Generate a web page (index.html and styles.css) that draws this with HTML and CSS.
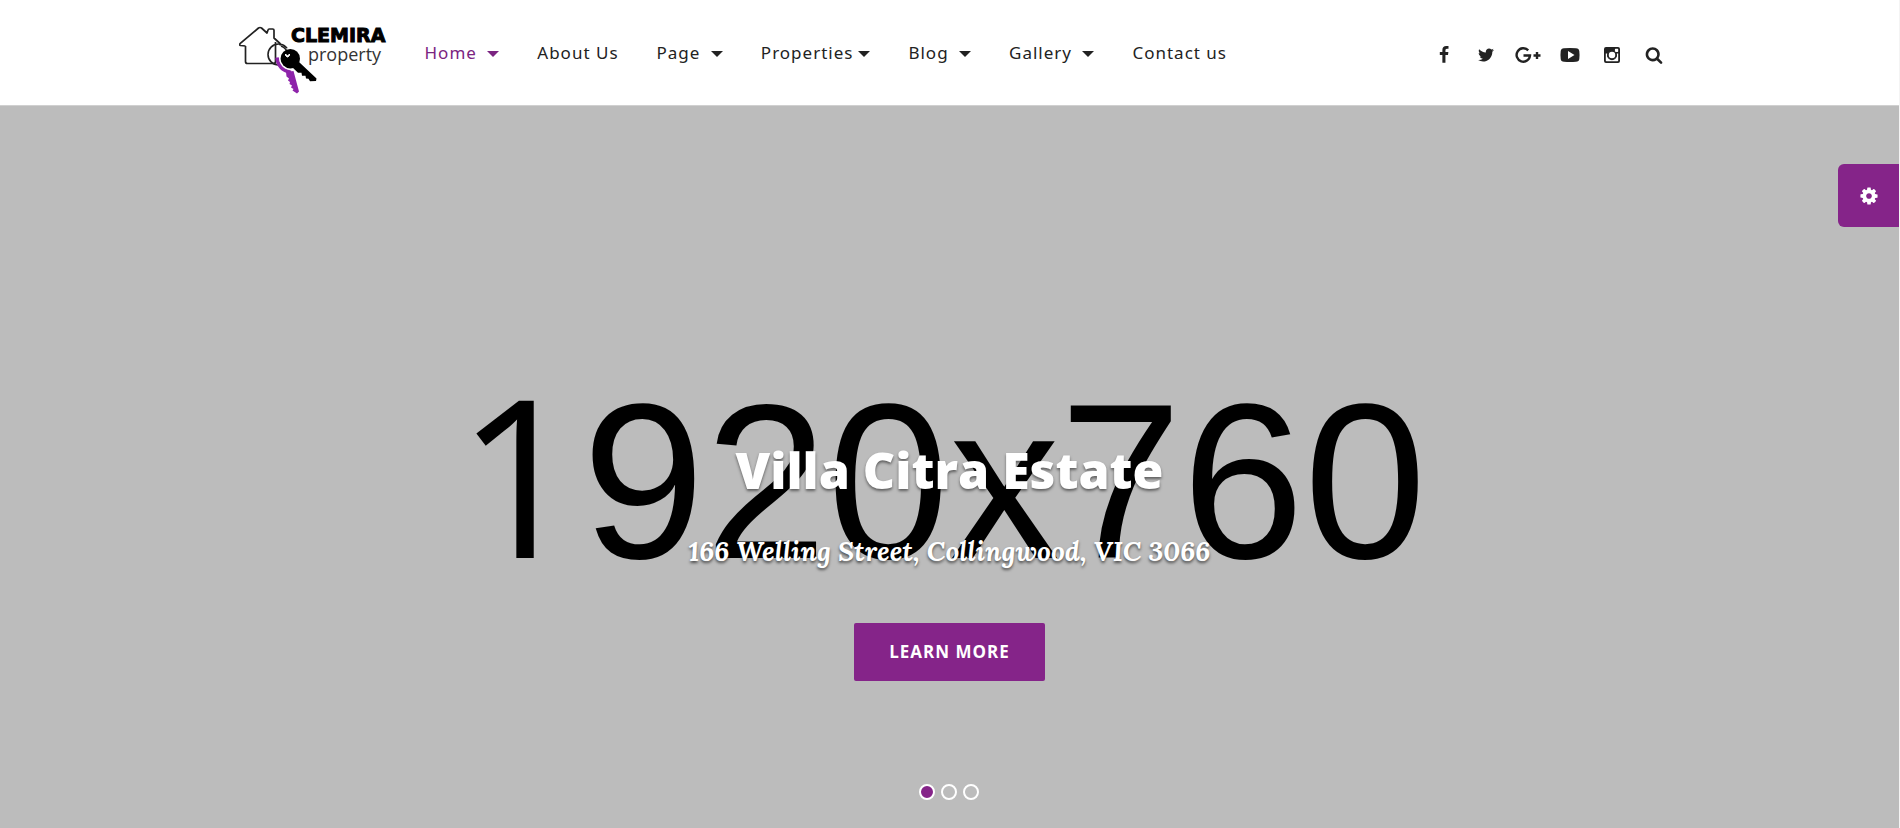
FILE: index.html
```html
<!DOCTYPE html>
<html lang="en">
  <head>
    <meta charset="UTF-8" />
    <meta name="viewport" content="width=device-width, initial-scale=1.0" />
    <title>Clemira Property</title>
    <link rel="stylesheet" href="styles.css">
  </head>
  <body>
    <header class="header">
      <div class="container">
        <a href="#" class="logo" aria-label="Clemira property">
          <svg width="148" height="78" viewBox="0 0 148 78">
            <!-- house -->
            <path d="M6.500 28v15.500q0 2 2 2h26q2 0 2-2V24M6.500 28l-5-.5q-1.500-.5-.5-1.800L19.500 10q1.500-1 3 0l5.500 5 1-3q.2-1 1.200-1h3.500q1.300 0 1.300 1.300V20l6 5.500q1 1-.5 1.500" fill="none" stroke="#222" stroke-width="1.700" stroke-linejoin="round" />
            <!-- key ring and keys -->
            <circle cx="39.500" cy="36.500" r="10.500" fill="none" stroke="#222" stroke-width="1.600" />
            <path d="M38 39.500q1 12 14 15" fill="none" stroke="#8e24aa" stroke-width="3.500" />
            <path d="M47 54l7.500-1 5.500 20.500-2 2-4.500-3 1-1.500-2.500-1.500 1-2-2.500-1.500.5-2-2-1.500 1-2-2.500-2z" fill="#8e24aa" />
            <circle cx="51.300" cy="40.700" r="11" fill="#fff" />
            <path d="M42 28q6 2 6.500 9" fill="none" stroke="#222" stroke-width="1.400" />
            <path d="M53 49l7-5 17.500 16.500-.5 2.500-6 .3-1.500-2.500-2.500-.3-.5-2.800-3.500 0-.5-3-3.500 0z" fill="#000" />
            <circle cx="51.300" cy="40.700" r="9.700" fill="#000" />
            <path d="M46.500 36v1.500q2 3 4 0V36l-2 2z" fill="#fff" stroke="#fff" />
            <text x="52" y="24" class="logo-name">CLEMIRA</text>
            <text x="69" y="43" class="logo-sub">property</text>
          </svg>
        </a>

        <nav class="menu">
          <a href="#" class="active">Home <span class="caret"></span></a>
          <a href="#">About Us</a>
          <a href="#">Page <span class="caret"></span></a>
          <a href="#">Properties<span class="caret"></span></a>
          <a href="#">Blog <span class="caret"></span></a>
          <a href="#">Gallery <span class="caret"></span></a>
          <a href="#">Contact us</a>
        </nav>

        <div class="social">
          <a href="#" aria-label="Facebook">
            <svg width="18" height="18" viewBox="0 0 1792 1792"><path d="M1343 12v264h-157q-86 0-116 36t-30 108v189h293l-39 296h-254v759h-306v-759h-255v-296h255v-218q0-186 104-288.500t277-102.500q147 0 228 12z" /></svg>
          </a>
          <a href="#" aria-label="Twitter">
            <svg width="18" height="18" viewBox="0 0 1792 1792"><path d="M1684 408q-67 98-162 167 1 14 1 42 0 130-38 259.500t-115.500 248.500-184.500 210.500-258 146-323 54.500q-271 0-496-145 35 4 78 4 225 0 401-138-105-2-188-64.500t-114-159.500q33 5 61 5 43 0 85-11-112-23-185.500-111.500t-73.500-205.500v-4q68 38 146 41-66-44-105-115t-39-154q0-88 44-163 121 149 294.500 238.500t371.500 99.500q-8-38-8-74 0-134 94.500-228.500t228.500-94.500q140 0 236 102 109-21 205-78-37 115-142 178 93-10 186-50z" /></svg>
          </a>
          <a href="#" aria-label="Google Plus">
            <svg width="26" height="18" viewBox="0 0 26 18"><path d="M13.200 4.400A6.700 6.700 0 1 0 15 9.500H8.500M22 6v7M18.500 9.500h7" fill="none" stroke="#222" stroke-width="2.400" /></svg>
          </a>
          <a href="#" aria-label="YouTube">
            <svg width="20" height="18" viewBox="0 0 20 18"><path fill-rule="evenodd" d="M4 2.200Q10 1.700 16 2.200 19 2.400 19.300 5q.5 4 0 8-.3 2.600-3.300 2.800-6 .5-12 0Q1 15.600.7 13q-.5-4 0-8Q1 2.400 4 2.200zM8 5v8l6.500-4z" /></svg>
          </a>
          <a href="#" aria-label="Instagram">
            <svg width="18" height="18" viewBox="0 0 18 18"><path fill-rule="evenodd" d="M3 1h12q2 0 2 2v12q0 2-2 2H3q-2 0-2-2V3q0-2 2-2zM2.800 7.500v7q0 .7.700.7h11q.7 0 .7-.7v-7h-1.500a5 5 0 1 1-9.400 0zM12.500 2.800q-.6 0-.6.6v1.900q0 .6.600.6h2.100q.6 0 .6-.6V3.400q0-.6-.6-.6z" /><circle cx="9" cy="9" r="4" fill="#fff" /><circle cx="9" cy="9" r="4" fill="none" stroke="#222" stroke-width="1.500" /></svg>
          </a>
          <a href="#" aria-label="Search">
            <svg width="18" height="18" viewBox="0 0 1792 1792"><path d="M1216 832q0-185-131.500-316.500t-316.500-131.500-316.500 131.500-131.500 316.500 131.500 316.500 316.500 131.500 316.500-131.500 131.500-316.500zm512 832q0 52-38 90t-90 38q-54 0-90-38l-343-342q-179 124-399 124-143 0-273.500-55.500t-225-150-150-225-55.500-273.500 55.500-273.500 150-225 225-150 273.500-55.500 273.500 55.500 225 150 150 225 55.500 273.500q0 220-124 399l343 343q37 37 37 90z" /></svg>
          </a>
        </div>
      </div>
    </header>

    <section class="hero">
      <div class="placeholder" aria-hidden="true">
        <div><span class="one">1</span>920x760</div>
      </div>
      <div class="caption">
        <h1>Villa Citra Estate</h1>
        <p>166 Welling Street, Collingwood, VIC 3066</p>
        <a href="#" class="btn">LEARN MORE</a>
      </div>
      <div class="dots">
        <button class="dot current" aria-label="Slide 1"></button>
        <button class="dot" aria-label="Slide 2"></button>
        <button class="dot" aria-label="Slide 3"></button>
      </div>
      <button class="settings" aria-label="Settings">
        <svg width="20" height="20" viewBox="0 0 1792 1792"><path d="M1152 896q0-106-75-181t-181-75-181 75-75 181 75 181 181 75 181-75 75-181zm512-109v222q0 12-8 23t-20 13l-185 28q-19 54-39 91 35 50 107 138 10 12 10 25t-9 23q-27 37-99 108t-94 71q-12 0-26-9l-138-108q-44 23-91 38-16 136-29 186-7 28-36 28h-222q-14 0-24.500-8.500t-11.500-21.500l-28-184q-49-16-90-37l-141 107q-10 9-25 9-14 0-25-11-126-114-165-168-7-10-7-23 0-12 8-23 15-21 51-66.500t54-70.500q-27-50-41-99l-183-27q-13-2-21-12.500t-8-23.500v-222q0-12 8-23t19-13l186-28q14-46 39-92-40-57-107-138-10-12-10-24 0-10 9-23 26-36 98.500-107.500t94.500-71.500q13 0 26 10l138 107q44-23 91-38 16-136 29-186 7-28 36-28h222q14 0 24.500 8.500t11.500 21.500l28 184q49 16 90 37l142-107q9-9 24-9 13 0 25 10 129 119 165 170 7 8 7 22 0 12-8 23-15 21-51 66.500t-54 70.500q26 50 41 98l183 28q13 2 21 12.500t8 23.500z" /></svg>
      </button>
    </section>
  </body>
</html>
```

FILE: styles.css
```css
* {
  box-sizing: border-box;
}
body {
  margin: 0;
  min-height: 100vh;
  display: flex;
  flex-direction: column;
  border-right: 1px solid #f4f4f4;
  font-family: "Noto Sans", sans-serif;
  color: #222;
}
a {
  color: inherit;
  text-decoration: none;
}
svg {
  display: block;
}

/* header */
.header {
  background: #fff;
  border-bottom: 1px solid #d0d0d0;
}
.container {
  max-width: 1434px;
  height: 105px;
  margin: 0 auto;
  padding-left: 6px;
  display: flex;
  align-items: center;
}
.logo {
  padding-top: 8px;
}
.logo-name {
  font: bold 19px "DejaVu Sans", sans-serif;
  fill: #000;
  stroke: #000;
  stroke-width: 1px;
}
.logo-sub {
  font: 18px "Open Sans", sans-serif;
  fill: #333;
}
.menu {
  display: flex;
  gap: 38px;
  margin-left: 38px;
  font-size: 17px;
  letter-spacing: 1px;
}
.menu a {
  white-space: nowrap;
}
.menu .active {
  color: #7b2481;
}
.caret {
  display: inline-block;
  margin-left: 5px;
  border: 6px solid transparent;
  border-top-color: currentColor;
  border-bottom: 0;
  vertical-align: 2px;
}
.social {
  display: flex;
  gap: 16px;
  margin-left: auto;
  padding-top: 5px;
  fill: #222;
}
.social a {
  width: 26px;
  display: flex;
  justify-content: center;
}

/* slider */
.hero {
  flex: 1;
  position: relative;
  display: flex;
  flex-direction: column;
  justify-content: flex-end;
  align-items: center;
  overflow: hidden;
  background: #bcbcbc;
  text-align: center;
}
.placeholder {
  position: absolute;
  inset: 0;
  display: flex;
  justify-content: center;
  align-items: center;
  padding: 20px 16px 0 0;
  font: 220px/1 "Liberation Sans", Arial, sans-serif;
  color: #000;
}
.one {
  font-family: "Open Sans", sans-serif;
}
.caption {
  position: relative;
  color: #fff;
}
.caption h1 {
  margin: 0 0 31px;
  font: 800 50px/60px "Open Sans", sans-serif;
  text-shadow: 0 2px 3px rgba(0, 0, 0, 0.5);
}
.caption p {
  margin: 0 0 52px;
  font: italic bold 27px/40px Lora, "Liberation Serif", serif;
  text-shadow: 0 2px 3px rgba(0, 0, 0, 0.6);
}
.btn {
  display: inline-block;
  padding: 0 35px;
  border-radius: 2px;
  background: #852489;
  font: 700 17px/58px "Open Sans", sans-serif;
  letter-spacing: 1px;
}
.dots {
  position: relative;
  display: flex;
  gap: 6px;
  padding: 103px 2px 28px 0;
}
.dot {
  width: 16px;
  height: 16px;
  padding: 0;
  border: 2px solid #fff;
  border-radius: 50%;
  background: transparent;
  cursor: pointer;
}
.dot.current {
  background: #852489;
}
.settings {
  position: absolute;
  top: 58px;
  right: 0;
  width: 61px;
  height: 63px;
  display: flex;
  justify-content: center;
  align-items: center;
  border: 0;
  border-radius: 6px 0 0 6px;
  background: #852489;
  fill: #fff;
  cursor: pointer;
}
```
